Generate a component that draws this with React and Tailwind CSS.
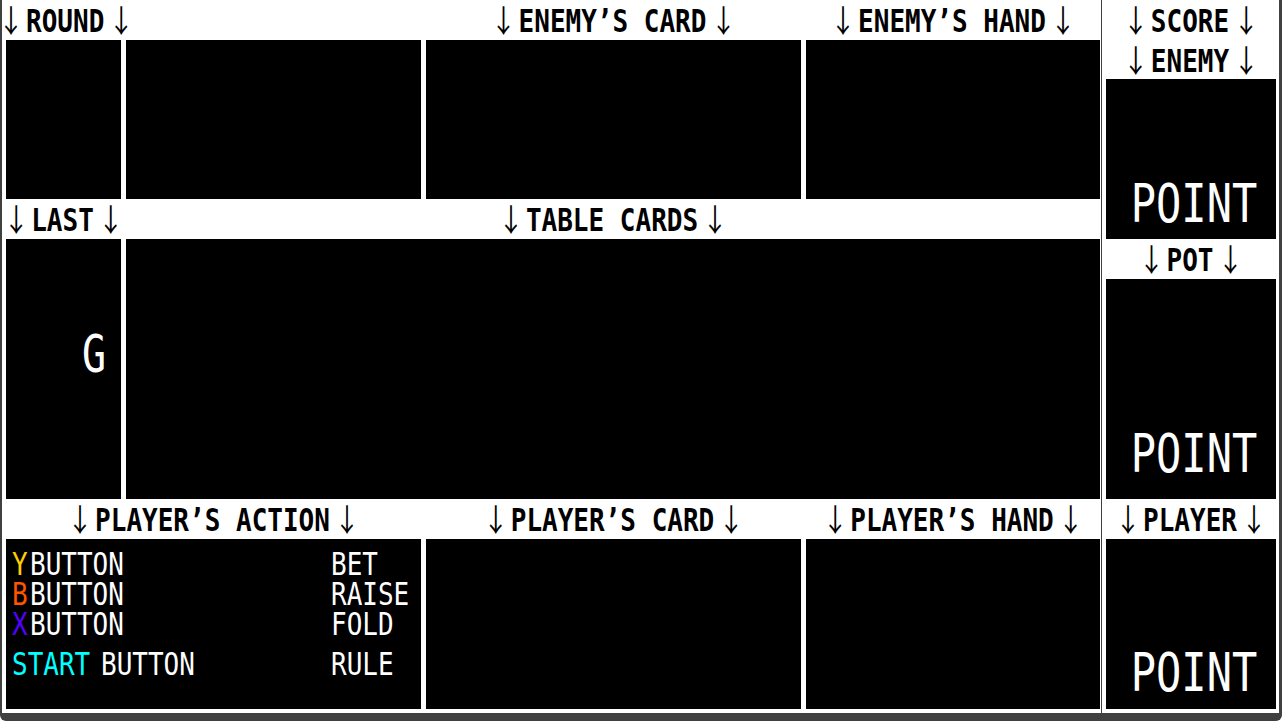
const Label = ({ children, className = "justify-center" }) => {
  return (
    <div className={`flex items-center ${className}`}>
      <span className="inline-block scale-y-[1.2] whitespace-pre text-[26px] leading-[26px] font-bold text-black">
        <span className="ml-[1px] mr-[2px] font-['Noto_Sans_CJK_JP',sans-serif] font-normal">↓</span>
        {children}
        <span className="ml-[4px] mr-[1px] font-['Noto_Sans_CJK_JP',sans-serif] font-normal">↓</span>
      </span>
    </div>
  );
};

const Point = ({ className }) => {
  return (
    <div className={`flex items-end justify-center bg-black pl-[6px] ${className}`}>
      <span className="inline-block origin-bottom scale-y-[1.27] text-[42px] leading-none text-white">
        POINT
      </span>
    </div>
  );
};

const actions = [
  { key: "Y", color: "text-[#ffcc00]", label: "BET" },
  { key: "B", color: "text-[#ff5500]", label: "RAISE" },
  { key: "X", color: "text-[#5500ff]", label: "FOLD" },
];

const ActionRow = ({ keyName, color, label, className = "" }) => {
  return (
    <div className={`grid h-[30px] grid-cols-[319px_auto] items-center ${className}`}>
      <span className="inline-block scale-y-[1.2] leading-[24px]">
        <span className={`inline-block ${keyName === "START" ? "w-[89px]" : "w-[18px]"} ${color}`}>
          {keyName}
        </span>
        BUTTON
      </span>
      <span className="inline-block scale-y-[1.2] leading-[24px]">{label}</span>
    </div>
  );
};

const App = () => {
  return (
    <div className="flex h-[721px] w-[1282px] overflow-hidden bg-white font-['DejaVu_Sans_Mono','Liberation_Mono',monospace]">
      {/* main board */}
      <div className="h-full w-[1101px] rounded-bl-[6px] border-b-8 border-l-2 border-[#404040] pb-[4px] pl-[4px] pr-[1px]">
        <div className="grid grid-cols-[115px_295px_375px_294px] grid-rows-[40px_159px_40px_260px_40px_170px] gap-x-[5px]">
          <Label className="col-span-2 -ml-[9px] justify-start">ROUND</Label>
          <Label>ENEMY’S CARD</Label>
          <Label>ENEMY’S HAND</Label>

          <div className="bg-black" />
          <div className="bg-black" />
          <div className="bg-black" />
          <div className="bg-black" />

          <Label>LAST</Label>
          <Label className="col-span-3 justify-center">TABLE CARDS</Label>

          <div className="flex justify-end bg-black pr-[15px] pt-[89px]">
            <span className="inline-block h-[40px] origin-top scale-y-[1.3] text-[40px] leading-none text-white">
              G
            </span>
          </div>
          <div className="col-span-3 bg-black" />

          <Label className="col-span-2 justify-center">PLAYER’S ACTION</Label>
          <Label>PLAYER’S CARD</Label>
          <Label>PLAYER’S HAND</Label>

          <div className="col-span-2 bg-black pl-[6px] pt-[10px] text-[26px] text-white">
            {actions.map((a) => (
              <ActionRow key={a.key} keyName={a.key} color={a.color} label={a.label} />
            ))}
            <ActionRow
              className="mt-[10px]"
              keyName="START"
              color="text-[#00ffff]"
              label="RULE"
            />
          </div>
          <div className="bg-black" />
          <div className="bg-black" />
        </div>
      </div>

      {/* score board */}
      <div className="h-full w-[181px] rounded-br-[6px] border-b-8 border-l border-r-[3px] border-[#404040] pb-[4px] pl-[4px] pr-[3px]">
        <div className="grid grid-rows-[40px_39px_160px_40px_220px_40px_170px]">
          <Label>SCORE</Label>
          <Label>ENEMY</Label>
          <Point className="pb-[8px]" />
          <Label>POT</Label>
          <Point className="pb-[18px]" />
          <Label>PLAYER</Label>
          <Point className="pb-[9px]" />
        </div>
      </div>
    </div>
  );
};

export default App;
